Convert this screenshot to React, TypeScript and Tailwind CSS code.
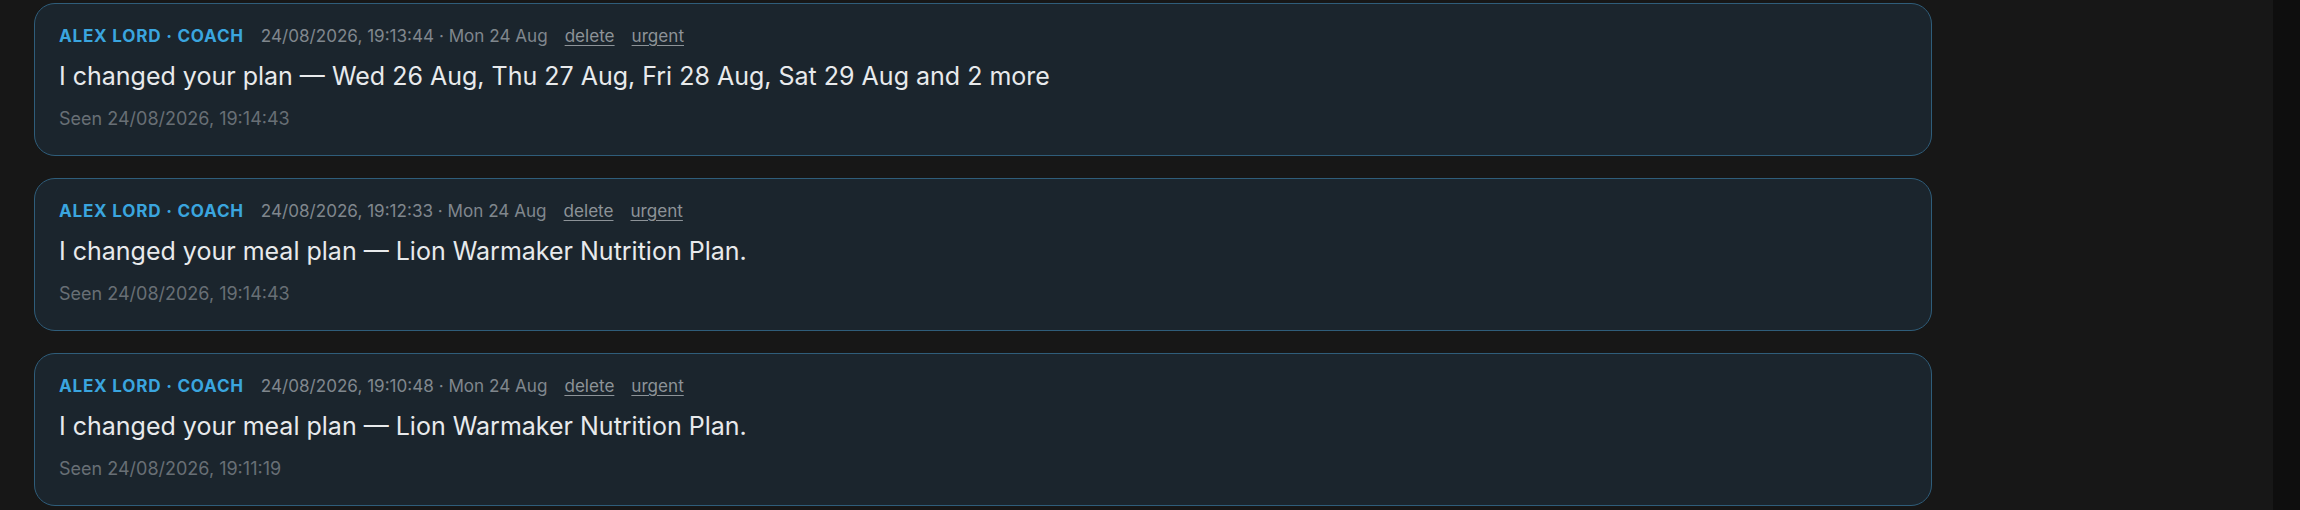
const messages = [
  {
    sent: '24/08/2026, 19:13:44 · Mon 24 Aug',
    body: 'I changed your plan — Wed 26 Aug, Thu 27 Aug, Fri 28 Aug, Sat 29 Aug and 2 more',
    seen: 'Seen 24/08/2026, 19:14:43',
  },
  {
    sent: '24/08/2026, 19:12:33 · Mon 24 Aug',
    body: 'I changed your meal plan — Lion Warmaker Nutrition Plan.',
    seen: 'Seen 24/08/2026, 19:14:43',
  },
  {
    sent: '24/08/2026, 19:10:48 · Mon 24 Aug',
    body: 'I changed your meal plan — Lion Warmaker Nutrition Plan.',
    seen: 'Seen 24/08/2026, 19:11:19',
  },
]

function MessageCard({ sent, body, seen }: { sent: string; body: string; seen: string }) {
  return (
    <div className="rounded-[21px] border-[1.5px] border-[#2f5d7a] bg-[#1b252d] px-[24px] pt-[20px] pb-[24px]">
      <div className="flex items-center gap-[17px] text-[17.1px] leading-[24px]">
        <span className="font-bold uppercase tracking-[0.045em] text-[#3aa5df]">Alex Lord · Coach</span>
        <span className="text-[#80878d]">{sent}</span>
        <span className="text-[#8d9398] underline underline-offset-[3px]">delete</span>
        <span className="text-[#8d9398] underline underline-offset-[3px]">urgent</span>
      </div>
      <p className="mt-[11px] text-[25px] leading-[34px] text-[#e8eaec]">{body}</p>
      <p className="mt-[14px] text-[18px] leading-[24px] text-[#686f75]">{seen}</p>
    </div>
  )
}

export default function App() {
  return (
    <div className="flex h-[510px] w-[2300px] overflow-hidden bg-[#171717] font-['Inter',sans-serif]">
      <main className="flex-1 pl-[34px] pt-[3px]">
        <div className="flex w-[1898px] flex-col gap-[22px]">
          {messages.map((m, i) => (
            <MessageCard key={i} sent={m.sent} body={m.body} seen={m.seen} />
          ))}
        </div>
      </main>
      <div className="w-[27px] bg-[#0e0e0e]" />
    </div>
  )
}
